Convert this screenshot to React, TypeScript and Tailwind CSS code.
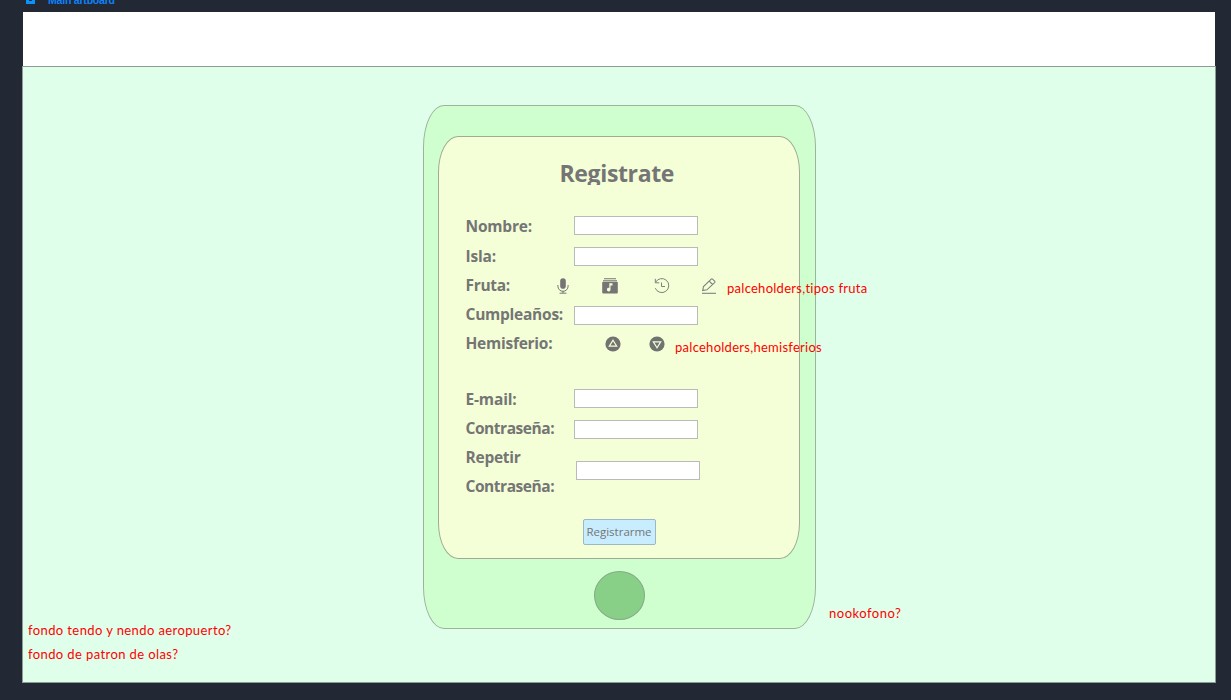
import type { ReactNode } from "react";

const MicIcon = () => (
  <svg width="12" height="16" viewBox="0 0 12 16" fill="none">
    <rect x="3.2" y="0.3" width="5.6" height="10.4" rx="2.8" fill="#757575" />
    <path d="M0.9 7v1.2a5.1 5.1 0 0 0 10.2 0V7M6 13v2M2.6 15.2h6.8" stroke="#757575" strokeWidth="1" />
  </svg>
);

const MusicLibraryIcon = () => (
  <svg width="16" height="16" viewBox="0 0 16 16" fill="none">
    <path d="M2 0.7h12M1 2.7h14" stroke="#757575" strokeWidth="1.1" />
    <rect x="0.2" y="3.8" width="15.6" height="11.8" rx="1" fill="#757575" />
    <path d="M7.3 5.2h3.2v2.2H8.5v4.3a1.8 1.8 0 1 1-1.2-1.7z" fill="#f4ffd7" />
  </svg>
);

const HistoryIcon = () => (
  <svg width="16" height="16" viewBox="0 0 16 16" fill="none" stroke="#808080" strokeWidth="1">
    <path d="M1.6 4.3A7 7 0 1 1 1.3 10.2" />
    <path d="M1.3 0.8v4h4M7.5 4.5v4H11" />
  </svg>
);

const PencilIcon = () => (
  <svg width="16" height="16" viewBox="0 0 16 16" fill="none" stroke="#808080" strokeWidth="1.1">
    <path d="M1.7 12.6l0.8-4.1 7.7-7.3q0.7-0.6 1.4 0l2 2q0.6 0.7 0 1.4l-7.7 7.2zM8.2 3.1l3.4 3.4" />
    <path d="M1 15.3h14" />
  </svg>
);

const TriangleIcon = ({ down = false }: { down?: boolean }) => (
  <svg width="16" height="16" viewBox="0 0 16 16" className={down ? "rotate-180" : ""}>
    <circle cx="8" cy="8" r="7.6" fill="#707370" />
    <path d="M8 4.2l3.7 6H4.3z" fill="none" stroke="#f4ffd7" strokeWidth="1.2" />
  </svg>
);

const Row = ({ label, className, children }: { label: ReactNode; className: string; children: ReactNode }) => (
  <div className={`flex items-start ${className}`}>
    <div className="w-[108px] shrink-0 whitespace-nowrap text-[15.5px] leading-[29px] font-bold">{label}</div>
    {children}
  </div>
);

const Field = ({ className }: { className: string }) => (
  <input className={`h-[19px] w-[124px] border border-[#b9bbb9] bg-white px-1 text-xs outline-none ${className}`} />
);

const Note = ({ className, children }: { className: string; children: ReactNode }) => (
  <p className={`absolute whitespace-nowrap font-[Lato,sans-serif] text-[13px] leading-5 text-[#ff0000] ${className}`}>
    {children}
  </p>
);

export default function App() {
  return (
    <div className="relative flex h-[700px] w-[1231px] flex-col overflow-hidden bg-[#222834] font-['Open_Sans','Noto_Sans',sans-serif] text-[#757575]">
      <header className="flex h-3 shrink-0 items-start overflow-hidden pl-[26px]">
        <svg width="9" height="4" viewBox="0 0 9 4">
          <path d="M0 0h9v4H0z" fill="#0794ff" />
          <path d="M3 0h3v1H3z" fill="#222834" />
        </svg>
        <span className="-mt-[7px] ml-[13px] font-['Liberation_Sans',sans-serif] text-[10.5px] leading-[14px] font-bold tracking-[-0.2px] text-[#0a84ff]">
          Main artboard
        </span>
      </header>

      <main className="ml-[22px] flex h-[672px] w-[1194px] flex-col">
        <div className="ml-px h-[54px] w-[1192px] shrink-0 bg-white" />
        <section className="flex h-[617px] flex-col items-center border border-[#8f9b96] bg-[#e0ffeb] pt-[38px]">
          <div className="flex h-[524px] w-[393px] flex-col items-center rounded-[21px/42px] border border-[#9fb2a0] bg-[#cfffcf] pt-[30px]">
            <div className="ml-[14px] flex h-[423px] w-[362px] flex-col self-start rounded-[20px/36px] border border-[#a0aa96] bg-[#f4ffd7] pl-[27px]">
              <h1 className="mt-[19px] ml-[94px] h-[29px] overflow-hidden text-[23px] leading-[34px] font-bold tracking-[-0.35px] whitespace-nowrap">
                Registrate
              </h1>
              <Row label={<span className="tracking-[-0.2px]">Nombre:</span>} className="mt-[27px] h-[29px]"><Field className="mt-1" /></Row>
              <Row label={<span className="tracking-[-0.2px]">Isla:</span>} className="mt-px h-[29px]"><Field className="mt-[5px]" /></Row>
              <Row label={<span className="tracking-[-0.3px]">Fruta:</span>} className="h-[29px]">
                <div className="-ml-[17px] flex h-[29px] items-center">
                  <MicIcon />
                  <span className="ml-[33px]"><MusicLibraryIcon /></span>
                  <span className="ml-9"><HistoryIcon /></span>
                  <span className="ml-[31px]"><PencilIcon /></span>
                </div>
              </Row>
              <Row label={<span className="tracking-[-0.25px]">Cumpleaños:</span>} className="h-[29px]"><Field className="mt-1.5" /></Row>
              <Row label={<span className="tracking-[-0.25px]">Hemisferio:</span>} className="h-[29px]">
                <div className="ml-[31px] flex h-[29px] items-center gap-7">
                  <TriangleIcon />
                  <TriangleIcon down />
                </div>
              </Row>
              <Row label={<span className="tracking-[-0.15px]">E-mail:</span>} className="mt-[27px] h-[29px]"><Field className="mt-1" /></Row>
              <Row label={<span className="tracking-[-0.45px]">Contraseña:</span>} className="h-[29px]"><Field className="mt-1.5" /></Row>
              <Row
                label={<><span className="tracking-[-0.25px]">Repetir</span><br /><span className="tracking-[-0.45px]">Contraseña:</span></>}
                className="h-[58px]"
              >
                <Field className="mt-[18px] ml-0.5" />
              </Row>
              <button className="mt-[18px] ml-[117px] h-[26px] w-[73px] rounded-[2px] border border-[#9db7c4] bg-[#c8edff] text-[11.5px] leading-6 whitespace-nowrap">
                Registrarme
              </button>
            </div>
            <div className="mt-3 h-[49px] w-[51px] rounded-[50%] border border-[#86a987] bg-[#88d088]" />
          </div>
        </section>
      </main>

      <Note className="top-[278px] left-[727px] tracking-[0.27px]">palceholders,tipos fruta</Note>
      <Note className="top-[337px] left-[675px] tracking-[0.27px]">palceholders,hemisferios</Note>
      <Note className="top-[603px] left-[829px] tracking-[0.5px]">nookofono?</Note>
      <Note className="top-[620px] left-[28px] tracking-[0.4px]">fondo tendo y nendo aeropuerto?</Note>
      <Note className="top-[644px] left-[28px] tracking-[0.4px]">fondo de patron de olas?</Note>
    </div>
  );
}
